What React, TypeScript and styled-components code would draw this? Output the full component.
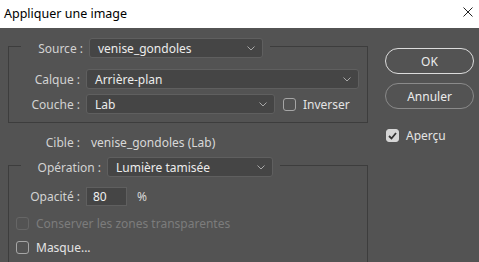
import React from 'react';
import styled, { createGlobalStyle } from 'styled-components';

const GlobalStyle = createGlobalStyle`
  html, body {
    margin: 0;
    padding: 0;
    background: #535353;
    font-family: 'Noto Sans', 'Open Sans', sans-serif;
    font-size: 12px;
  }
`;

const Window = styled.div`
  width: 479px;
  height: 262px;
  background: #535353;
  overflow: hidden;
  display: flex;
  flex-direction: column;
`;

const TitleBar = styled.div`
  height: 28px;
  flex-shrink: 0;
  background: #ffffff;
  display: flex;
  align-items: center;
  justify-content: space-between;
  padding: 0 6px 2px 4px;
  box-sizing: border-box;
  color: #000;
  font-size: 12.5px;
`;

const CloseButton = styled.div`
  width: 10px;
  height: 10px;
  display: flex;
  margin-bottom: 3px;
`;

const Content = styled.div`
  display: flex;
  flex-shrink: 0;
  gap: 17px;
  padding: 10px 0 0 8px;
`;

const LeftColumn = styled.div`
  width: 360px;
  display: flex;
  flex-direction: column;
`;

const RightColumn = styled.div`
  width: 89px;
  display: flex;
  flex-direction: column;
  padding-top: 10px;
`;

const Group = styled.fieldset<{ $top?: number; $pb?: number }>`
  margin: ${(p) => p.$top ?? 0}px 0 0 0;
  padding: 0 0 ${(p) => p.$pb ?? 8}px 0;
  border: 1px solid #3d3d3d;
  min-width: 0;
`;

const Legend = styled.legend`
  margin-left: 12px;
  padding: 0 7px 0 0;
  display: flex;
  align-items: flex-start;
  height: 16px;
`;

const LegendInner = styled.div`
  display: flex;
  align-items: center;
  margin-bottom: -4px;
`;

const Label = styled.span<{ $w: number; $gap?: number }>`
  width: ${(p) => p.$w}px;
  margin-right: ${(p) => p.$gap ?? 6}px;
  text-align: right;
  color: #d2d2d2;
  white-space: nowrap;
  flex-shrink: 0;
`;

const Select = styled.div<{ $w: number }>`
  width: ${(p) => p.$w}px;
  height: 20px;
  box-sizing: border-box;
  background: #454545;
  border: 1px solid #5f5f5f;
  border-radius: 3px;
  display: flex;
  align-items: center;
  justify-content: space-between;
  padding: 0 7px 0 8px;
  color: #ececec;
  flex-shrink: 0;
`;

const Chevron = () => (
  <svg width="8" height="5" viewBox="0 0 8 5">
    <path d="M0.5 0.5 L4 4 L7.5 0.5" fill="none" stroke="#a8a8a8" strokeWidth="1" />
  </svg>
);

const Body = styled.div<{ $pt: number }>`
  display: flex;
  flex-direction: column;
  gap: 5px;
  padding-top: ${(p) => p.$pt}px;
`;

const Row = styled.div<{ $h?: number; $pl?: number; $mt?: number }>`
  display: flex;
  align-items: center;
  height: ${(p) => p.$h ?? 20}px;
  padding-left: ${(p) => p.$pl ?? 0}px;
  margin-top: ${(p) => p.$mt ?? 0}px;
`;

const Spacer = styled.span<{ $w: number }>`
  width: ${(p) => p.$w}px;
  flex-shrink: 0;
`;

const Box = styled.span<{ $checked?: boolean; $disabled?: boolean }>`
  width: 13px;
  height: 13px;
  box-sizing: border-box;
  border-radius: 3px;
  border: 1px solid
    ${(p) => (p.$disabled ? '#666666' : p.$checked ? '#d6d6d6' : '#a6a6a6')};
  background: ${(p) => (p.$checked ? '#d6d6d6' : 'transparent')};
  display: inline-flex;
  align-items: center;
  justify-content: center;
  flex-shrink: 0;
`;

const CheckText = styled.span<{ $disabled?: boolean }>`
  margin-left: 7px;
  color: ${(p) => (p.$disabled ? '#7c7c7c' : '#e4e4e4')};
  white-space: nowrap;
`;

const Check = ({
  label,
  checked,
  disabled,
}: {
  label: string;
  checked?: boolean;
  disabled?: boolean;
}) => (
  <>
    <Box $checked={checked} $disabled={disabled}>
      {checked && (
        <svg width="9" height="8" viewBox="0 0 9 8">
          <path d="M1 4 L3.5 6.5 L8 1" fill="none" stroke="#333" strokeWidth="1.8" />
        </svg>
      )}
    </Box>
    <CheckText $disabled={disabled}>{label}</CheckText>
  </>
);

const Value = styled.span`
  color: #d8d8d8;
  margin-left: 5px;
`;

const Input = styled.div`
  width: 41px;
  height: 19px;
  box-sizing: border-box;
  background: #454545;
  border: 1px solid #5f5f5f;
  color: #f0f0f0;
  display: flex;
  align-items: center;
  padding-left: 6px;
`;

const Unit = styled.span`
  margin-left: 10px;
  color: #d8d8d8;
`;

const Button = styled.div<{ $primary?: boolean }>`
  height: 26px;
  box-sizing: border-box;
  border-radius: 13px;
  border: 1px solid ${(p) => (p.$primary ? '#dcdcdc' : '#8a8a8a')};
  color: #ececec;
  display: flex;
  align-items: center;
  justify-content: center;
  margin-bottom: 9px;
`;

const PreviewRow = styled.div`
  display: flex;
  align-items: center;
  margin-top: 9px;
  padding-left: 1px;
`;

const App: React.FC = () => {
  return (
    <Window>
      <GlobalStyle />
      <TitleBar>
        <span>Appliquer une image</span>
        <CloseButton>
          <svg width="10" height="10" viewBox="0 0 10 10">
            <path d="M0.5 0.5 L9.5 9.5 M9.5 0.5 L0.5 9.5" stroke="#222" strokeWidth="1" />
          </svg>
        </CloseButton>
      </TitleBar>
      <Content>
        <LeftColumn>
          <Group $pb={8}>
            <Legend>
              <LegendInner>
                <Label $w={62}>Source :</Label>
                <Select $w={174}>
                  <span>venise_gondoles</span>
                  <Chevron />
                </Select>
              </LegendInner>
            </Legend>
            <Body $pt={15}>
              <Row>
                <Label $w={71}>Calque :</Label>
                <Select $w={273}>
                  <span>Arrière-plan</span>
                  <Chevron />
                </Select>
              </Row>
              <Row>
                <Label $w={71}>Couche :</Label>
                <Select $w={189}>
                  <span>Lab</span>
                  <Chevron />
                </Select>
                <Spacer $w={8} />
                <Check label="Inverser" />
              </Row>
            </Body>
          </Group>
          <Row $mt={9}>
            <Label $w={72}>Cible :</Label>
            <Value>venise_gondoles (Lab)</Value>
          </Row>
          <Group $top={5} $pb={30}>
            <Legend>
              <LegendInner>
                <Label $w={80}>Opération :</Label>
                <Select $w={166}>
                  <span>Lumière tamisée</span>
                  <Chevron />
                </Select>
              </LegendInner>
            </Legend>
            <Body $pt={14}>
              <Row $h={19}>
                <Label $w={71}>Opacité :</Label>
                <Input>80</Input>
                <Unit>%</Unit>
              </Row>
              <Row $h={17} $pl={7} $mt={4}>
                <Check label="Conserver les zones transparentes" disabled />
              </Row>
              <Row $h={18} $pl={7} $mt={1}>
                <Check label="Masque..." />
              </Row>
            </Body>
          </Group>
        </LeftColumn>
        <RightColumn>
          <Button $primary>OK</Button>
          <Button>Annuler</Button>
          <PreviewRow>
            <Check label="Aperçu" checked />
          </PreviewRow>
        </RightColumn>
      </Content>
    </Window>
  );
};

export default App;
